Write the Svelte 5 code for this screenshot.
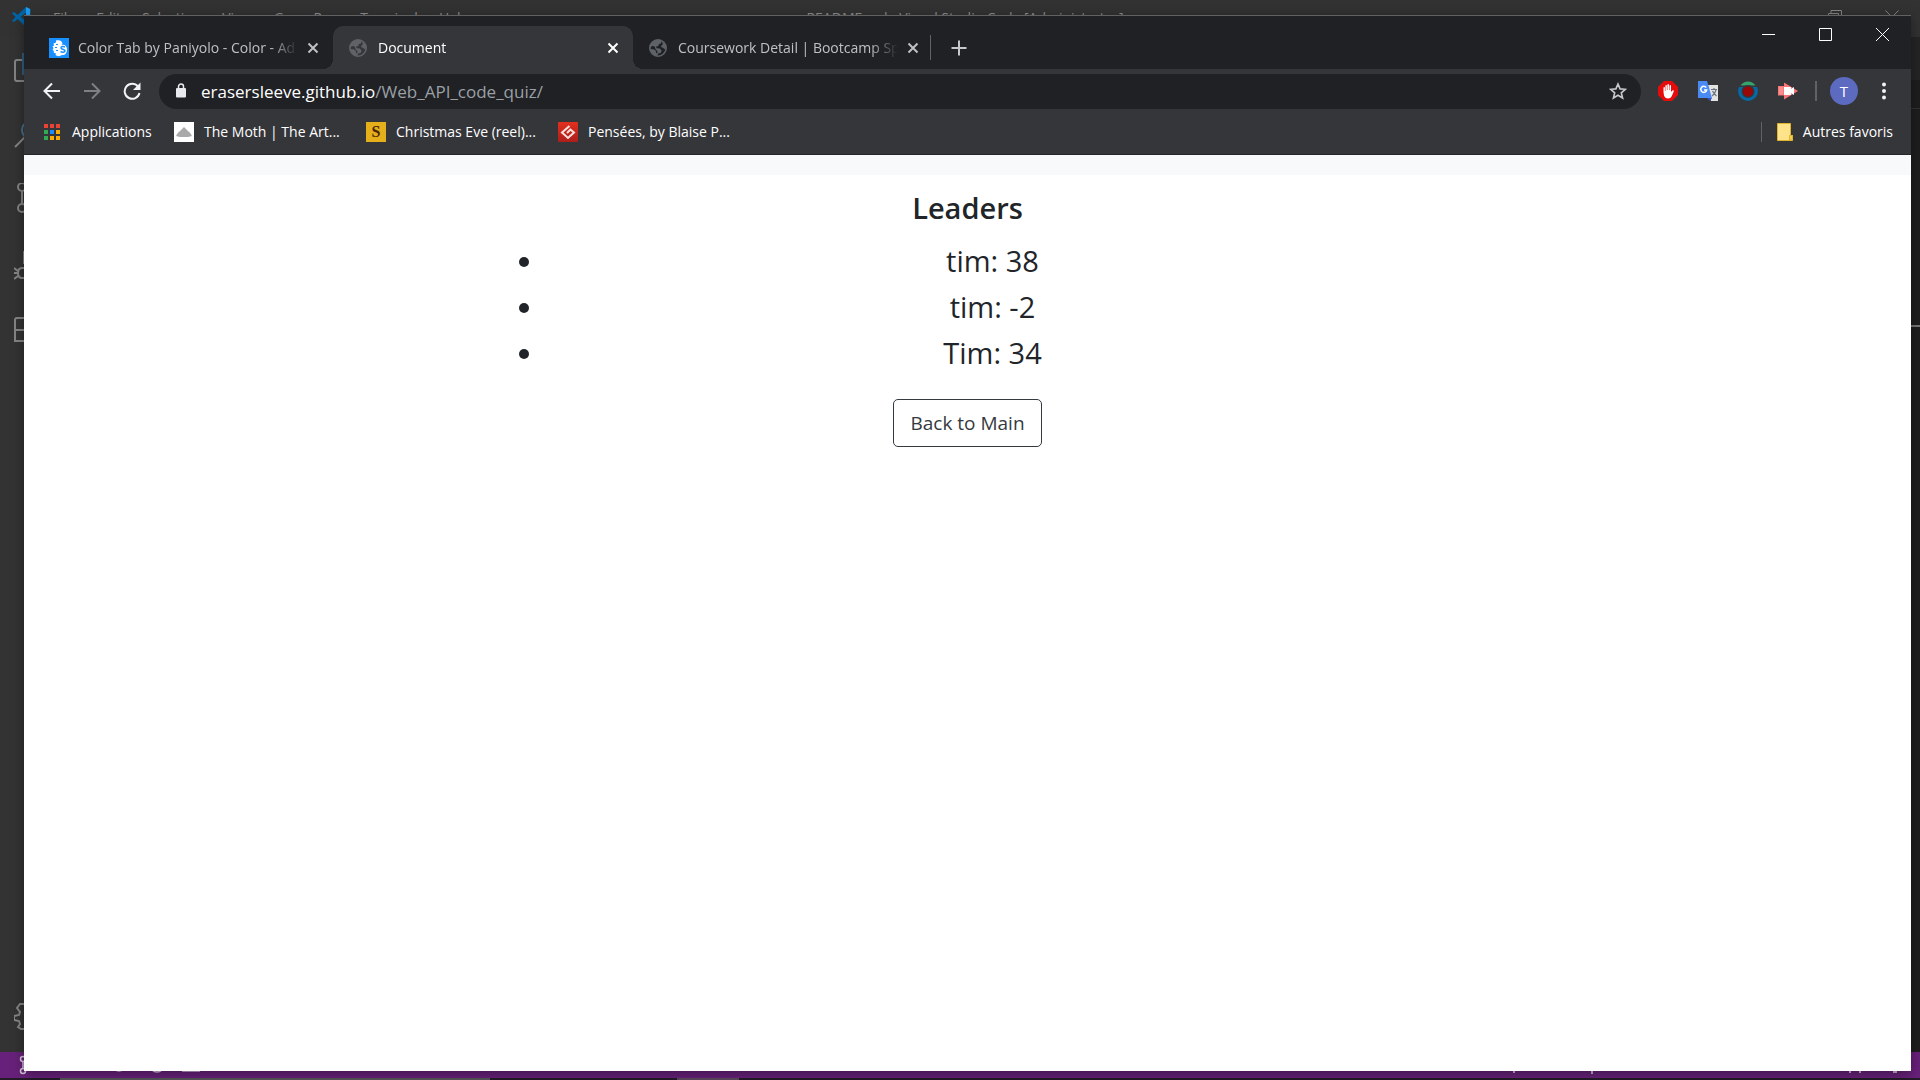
<script>
  const menus = ['File', 'Edit', 'Selection', 'View', 'Go', 'Run', 'Terminal', 'Help'];
  const scores = ['tim: 38', 'tim: -2', 'Tim: 34'];
  const appColors = ['#ea4335', '#ea4335', '#ea4335', '#34a853', '#1a8cff', '#fbab04', '#34a853', '#fbab04', '#fbab04'];
</script>

{#snippet globe()}
  <svg class="favicon globe" viewBox="0 0 20 20" aria-hidden="true">
    <circle cx="9" cy="10" r="8.2" fill="none" stroke="#5f6368" stroke-width="1.6" />
    <path fill="#5f6368" d="M1 10C1 5 4.500 1.800 9 1.800c1.500 0 2.600.400 3.500.900L12 5.500 9.800 6l-.300 2-2.300.500.300 1.700 3.500.200 1.600 2.300-1 2.200-2.600.600-.500 2.300C4 18 1.600 14.500 1.200 11l3.300.200 2.300 1.600.200 2 1.300.800.200-2.300-2-2-.800-2.800L3 8z" />
    <path fill="#5f6368" d="M13 3.500c2.500 1.500 4 3.500 4.100 6.200l-1.700 1.500-1.400-1.500-1.800-.500.200-1.700 1.500-1.300z" />
  </svg>
{/snippet}

{#snippet cross()}
  <svg width="12" height="12" viewBox="0 0 12 12" aria-hidden="true">
    <path d="M1.500 1.500l9 9M10.500 1.500l-9 9" stroke="currentColor" stroke-width="2" />
  </svg>
{/snippet}

<div class="desktop">
  <section class="editor">
    <header class="titlebar">
      <svg class="logo" viewBox="0 0 24 24" aria-hidden="true">
        <path fill="#0065a9" d="M18 0l5 2.500v19L18 24 8 14.500 3.500 18 1 16.700 5.500 12 1 7.300 3.500 6 8 9.500z" />
        <path fill="#1f9cf0" d="M18 0l5 2.500v19L18 24z" />
        <path fill="#323233" d="M18 7v10l-6.500-5z" />
      </svg>
      <nav class="menus">
        {#each menus as menu}<span>{menu}</span>{/each}
      </nav>
      <span class="doc-title">README.md - Visual Studio Code [Administrator]</span>
      <div class="editor-controls">
        <svg width="14" height="14" viewBox="0 0 14 14" fill="none" stroke="#858585"><path d="M.500 3.500h10v10h-10zM3 3V.500h10.500V11H11" /></svg>
        <svg width="14" height="14" viewBox="0 0 14 14" fill="none" stroke="#858585"><path d="M.500.500l13 13M13.500.500l-13 13" /></svg>
      </div>
    </header>
    <div class="workspace">
      <aside class="activity">
        <svg viewBox="0 0 32 32"><path d="M10 7H3q-2 0-2 2v17q0 2 2 2h15v-5" /><path stroke="#2f5f80" d="M9 1h12v20H9z" /></svg>
        <svg viewBox="0 0 32 32"><path d="M1 29l11-11" /><circle cx="17" cy="12" r="9" stroke="#46708c" /></svg>
        <svg viewBox="0 0 32 32"><circle cx="8" cy="4" r="4" /><circle cx="8" cy="25" r="4" /><path d="M8 8v13" /></svg>
        <svg viewBox="0 0 32 32"><path d="M10 3v13M12 20H8q-4 0-4 5t4 5h4M0 20l4 3M0 25h4M0 31l4-3" /></svg>
        <svg viewBox="0 0 32 32"><path d="M14 5H3q-2 0-2 2v21h24V17H1M13 5v23" /></svg>
        <svg class="gear" viewBox="0 0 32 32"><path d="M10 4H6L3 8l3 4-1 3-5 1v4l5 1 1 3-2 3 3 2h5l4-4" /></svg>
      </aside>
      <div class="panes">
        <div class="pane-tabs"></div>
        <div class="pane-crumbs"></div>
        <div class="pane-top"></div>
        <div class="pane-bottom"></div>
      </div>
    </div>
    <footer class="statusbar">
      <svg width="220" height="26" viewBox="0 0 220 26" fill="none" stroke="#d8c8de" stroke-width="1.500">
        <circle cx="23" cy="7" r="2.500" /><circle cx="23" cy="19" r="2.500" /><path d="M23 10v7" />
        <circle cx="119" cy="13" r="6" /><circle cx="157" cy="13" r="7" /><path d="M183 19l8-14 8 14z" />
      </svg>
      <svg width="420" height="26" viewBox="0 0 420 26" fill="#c9b5d0">
        <path d="M13 18h2v3h-2zM91 18h2v4h-2zM349 18h2v3h-2zM359 18h2v3h-2zM393 18h4v3h-4z" />
      </svg>
    </footer>
    <div class="taskbar"><i class="start"></i><i class="search"></i><i class="rest"></i><i class="app"></i></div>
  </section>

  <section class="browser">
    <header class="tabstrip">
      <div class="tab">
        <svg class="favicon" viewBox="0 0 20 20" aria-hidden="true">
          <rect width="20" height="20" fill="#1890ff" />
          <path fill="#fff" d="M7 2.500c3-1 6 0 6.500 3l-1 1.500c3-1 5.500 1 5.500 4.500s-2 6-5 5.500c-2 1.500-5 1.500-6.500 0l.500-1.500-2.500-1 .500-1.500-1.500-1 1-2-1-1.500 1.500-1-.500-2L7 4.500z" />
          <path stroke="#1890ff" fill="none" stroke-width="1.500" d="M16 9c-2-1-4-.500-4 1s4 1 4 2.800-3 1.700-4.500.900" />
          <path stroke="#1890ff" fill="none" d="M7 6.500h2M6 9.500h2M7 12.500h2" />
        </svg>
        <span class="tab-title">Color Tab by Paniyolo - Color - Ad</span>
        <button class="close" aria-label="Close tab">{@render cross()}</button>
      </div>
      <div class="tab active">
        {@render globe()}
        <span class="tab-title">Document</span>
        <button class="close" aria-label="Close tab">{@render cross()}</button>
      </div>
      <div class="tab last">
        {@render globe()}
        <span class="tab-title">Coursework Detail | Bootcamp Sp</span>
        <button class="close" aria-label="Close tab">{@render cross()}</button>
      </div>
      <button class="new-tab" aria-label="New tab">
        <svg width="16" height="16" viewBox="0 0 16 16"><path d="M8 .500v15M.500 8h15" stroke="#c6c8cb" stroke-width="2" /></svg>
      </button>
      <div class="window-controls">
        <button aria-label="Minimize"><svg width="13" height="13" viewBox="0 0 13 13"><path d="M0 6.500h13" /></svg></button>
        <button aria-label="Maximize"><svg width="13" height="13" viewBox="0 0 13 13"><path d="M.500.500h12v12H.500z" /></svg></button>
        <button aria-label="Close"><svg width="13" height="13" viewBox="0 0 13 13"><path d="M0 0l13 13M13 0L0 13" /></svg></button>
      </div>
    </header>

    <div class="toolbar">
      <button class="tool" aria-label="Back"><svg width="18" height="18" viewBox="0 0 18 18" fill="none" stroke="#f1f3f4" stroke-width="2"><path d="M17 9H2M9 1.500L1.500 9 9 16.500" /></svg></button>
      <button class="tool" aria-label="Forward"><svg width="18" height="18" viewBox="0 0 18 18" fill="none" stroke="#7d8084" stroke-width="2"><path d="M1 9h15M9 1.500L16.500 9 9 16.500" /></svg></button>
      <button class="tool" aria-label="Reload"><svg width="18" height="18" viewBox="0 0 18 18" fill="none" stroke="#f1f3f4" stroke-width="2"><path d="M15 4.500A7.500 7.500 0 1 0 16.500 11" /><path fill="#f1f3f4" stroke="none" d="M17.500.500V8H10z" /></svg></button>
      <div class="omnibox">
        <svg width="12" height="16" viewBox="0 0 12 16" aria-hidden="true"><rect x="1" y="5" width="10" height="9.500" rx="1" fill="#e8eaed" /><path d="M3.500 6V3.500a2.500 2.500 0 0 1 5 0V6" fill="none" stroke="#e8eaed" stroke-width="1.500" /></svg>
        <span class="url">erasersleeve.github.io<span>/Web_API_code_quiz/</span></span>
        <button class="star" aria-label="Bookmark this page"><svg width="18" height="18" viewBox="0 0 18 18" fill="none" stroke="#c6c8cb" stroke-width="1.600"><path d="M9 2l2.100 4.900 5.200.400-4 3.500 1.300 5.200L9 13.200 4.400 16l1.300-5.200-4-3.500 5.200-.400z" /></svg></button>
      </div>
      <button class="tool" aria-label="Ad blocker">
        <svg width="20" height="20" viewBox="0 0 20 20"><path fill="#e60c0c" d="M6 0h8l6 6v8l-6 6H6l-6-6V6z" /><path fill="#fff" d="M5.500 11V6.500q1-.800 1.400 0V10h.500V4.500q.900-.900 1.500 0V9h.500V3.500q.900-.900 1.600 0V9h.500V4.500q.900-.900 1.500 0V11l1.300-1.500q1.300-.500 1.600.500L14 14.500q-1 3-4 3t-4-3z" /></svg>
      </button>
      <button class="tool" aria-label="Translate">
        <svg width="22" height="22" viewBox="0 0 22 22"><path fill="#e3e3e3" d="M11 5h10v16h-7z" /><path fill="none" stroke="#68757c" stroke-width="1.200" d="M14 9.500h6M17 8v1.500M19 10q-1 4-4 6M15.500 11q1.500 3 4 5" /><path fill="#3353c5" d="M10 18h5l-2 3z" /><path fill="#4a8af4" d="M1 1h9l5 17H1z" /><path fill="none" stroke="#fff" stroke-width="1.500" d="M9.200 7.600A3 3 0 1 0 9.700 10H7" /></svg>
      </button>
      <button class="tool" aria-label="Color extension">
        <svg width="20" height="20" viewBox="0 0 20 20"><path fill="#34a56b" d="M2.500 4.500Q5.500.500 10 .500t7.500 4z" /><path fill="#0668a4" d="M1 6h18q1 2 1 4a10 10 0 0 1-20 0q0-2 1-4z" /><circle cx="10" cy="10.500" r="6.500" fill="#35363a" /><circle cx="10" cy="10.500" r="5" fill="#980808" /></svg>
      </button>
      <button class="tool" aria-label="Screen recorder">
        <svg width="20" height="20" viewBox="0 0 20 20"><path fill="#fb7476" d="M0 5h6V1.500L20 10 6 18.500V14.500H0z" /><path fill="#fff" d="M6 6h7v2l3-2v8l-3-2v2H6z" /><path fill="#ffb3b4" d="M1 6h4v7.500H1z" opacity=".4" /></svg>
      </button>
      <span class="divider"></span>
      <button class="tool" aria-label="Profile T"><span class="avatar">T</span></button>
      <button class="tool" aria-label="Menu"><svg width="4" height="18" viewBox="0 0 4 18" fill="#f1f3f4"><circle cx="2" cy="2.500" r="2" /><circle cx="2" cy="9" r="2" /><circle cx="2" cy="15.500" r="2" /></svg></button>
    </div>

    <nav class="bookmarks">
      <a class="apps" href="#apps">
        <span class="app-grid">{#each appColors as color}<i style:background={color}></i>{/each}</span>
        Applications
      </a>
      <a class="mark" href="#moth">
        <svg width="20" height="20" viewBox="0 0 20 20"><path fill="#fff" d="M0 0h20v20H0z" /><path fill="#a9a9a9" d="M2 14q1-3 4-5l4-4 4 4q3 2 4 5l-4 1H6z" /></svg>
        The Moth | The Art...
      </a>
      <a class="mark" href="#reel">
        <span class="letter-icon">S</span>
        Christmas Eve (reel)...
      </a>
      <a class="mark" href="#pensees">
        <svg width="20" height="20" viewBox="0 0 20 20"><defs><linearGradient id="red" x2="0" y2="1"><stop stop-color="#e3301f" /><stop offset="1" stop-color="#ad1e1a" /></linearGradient></defs><rect width="20" height="20" rx="1" fill="url(#red)" /><path d="M11.500 4L4 10.500l6 5.500 6-5.500-3.500-3L9 11" fill="none" stroke="#f4e2df" stroke-width="2" /></svg>
        Pensées, by Blaise P...
      </a>
      <a class="other" href="#other">
        <svg width="16" height="18" viewBox="0 0 16 18"><path fill="#ffe38a" stroke="#dfb52f" d="M.500.500h13v12h2v5H.500z" /><path fill="#f6cf50" stroke="#dfb52f" d="M12.500 12.500h3v3l-3 2z" /></svg>
        Autres favoris
      </a>
    </nav>

    <main class="page">
      <div class="strip"></div>
      <div class="leaders">
        <h1>Leaders</h1>
        <ul>
          {#each scores as score}<li>{score}</li>{/each}
        </ul>
        <button class="back">Back to Main</button>
      </div>
    </main>
  </section>
</div>

<style>
  :global(body) { margin: 0; background: #1e1e1e; }
  button { padding: 0; border: 0; background: none; color: inherit; font: inherit; }
  svg { display: block; flex: none; }
  .desktop { position: relative; height: 100vh; overflow: hidden; font-family: "Open Sans", "Noto Sans", sans-serif; }

  .editor { display: flex; flex-direction: column; height: 100%; font-size: 14px; color: #8f8f8f; }
  .titlebar { display: grid; grid-template-columns: auto 1fr auto 1fr; align-items: center; box-sizing: border-box; height: 37px; padding: 0 21px 3px 11px; background: #323233; white-space: nowrap; }
  .logo { width: 20px; height: 20px; }
  .menus { display: flex; gap: 21px; padding-left: 22px; }
  .editor-controls { display: flex; justify-content: flex-end; gap: 43px; }
  .workspace { display: flex; flex: 1; }
  .activity { display: flex; flex-direction: column; width: 60px; background: #333; }
  .activity svg { width: 32px; height: 32px; margin: 16px 14px 17px; fill: none; stroke: #858585; stroke-width: 2; }
  .activity .gear { margin-top: auto; margin-bottom: 20px; }
  .panes { display: flex; flex: 1; flex-direction: column; }
  .pane-tabs { height: 43px; background: #252526; }
  .pane-crumbs { height: 28px; border-bottom: 1px solid #333; }
  .pane-top { height: 216px; border-bottom: 2px solid #777; }
  .pane-bottom { flex: 1; }
  .statusbar { display: flex; justify-content: space-between; height: 26px; background: #68217a; }
  .taskbar { display: flex; height: 2px; background: #241a28; }
  .taskbar i { width: 60px; }
  .taskbar .search { width: 430px; background: #55555a; }
  .taskbar .rest { width: 187px; }
  .taskbar .app { width: 62px; background: #5c4a5e; }

  .browser { position: absolute; inset: 15px 9px 9px 24px; display: flex; flex-direction: column; background: #fff; color: #fff; font-size: 14px; box-shadow: 0 3px 12px rgba(0, 0, 0, 0.4); }
  .tabstrip { display: flex; align-items: flex-end; height: 53px; padding-left: 9px; border-top: 1px solid #616161; background: #202124; }
  .tab { position: relative; display: flex; align-items: center; gap: 9px; box-sizing: border-box; width: 300px; height: 43px; padding: 0 14px 0 16px; color: #bdc1c6; }
  .tab.active { border-radius: 10px 10px 0 0; background: #35363a; color: #fff; }
  .tab.active::before, .tab.active::after { content: ""; position: absolute; bottom: 0; width: 10px; height: 10px; }
  .tab.active::before { right: 100%; background: radial-gradient(circle at 0 0, transparent 10px, #35363a 10px); }
  .tab.active::after { left: 100%; background: radial-gradient(circle at 100% 0, transparent 10px, #35363a 10px); }
  .tab.last::after { content: ""; position: absolute; right: 2px; top: 9px; width: 1px; height: 25px; background: #5f6368; }
  .favicon { width: 20px; height: 20px; }
  .tab-title { flex: 1; overflow: hidden; white-space: nowrap; mask-image: linear-gradient(90deg, #000 calc(100% - 28px), transparent); }
  .new-tab { display: grid; place-items: center; width: 35px; height: 43px; margin-left: 8px; }
  .window-controls { display: flex; align-self: flex-start; margin-left: auto; }
  .window-controls button { display: grid; place-items: center; width: 57px; height: 37px; }
  .window-controls path { fill: none; stroke: #fff; stroke-width: 1; }

  .toolbar { display: flex; align-items: center; height: 44px; padding: 0 7px 0 8px; background: #35363a; }
  .tool { display: grid; place-items: center; width: 40px; height: 40px; }
  .omnibox { display: flex; flex: 1; align-items: center; height: 35px; margin: 0 7px; padding: 0 14px 0 16px; border-radius: 18px; background: #202124; }
  .url { flex: 1; padding-left: 14px; font-size: 17px; }
  .url span { color: #9aa0a6; }
  .divider { width: 2px; height: 20px; margin: 0 7px; background: #5f6368; }
  .avatar { width: 28px; height: 28px; border-radius: 50%; background: #5c6bc0; line-height: 28px; font-size: 15px; text-align: center; }

  .bookmarks { display: flex; align-items: center; height: 37px; padding: 0 18px 4px 20px; border-bottom: 1px solid #26272a; background: #35363a; }
  .bookmarks a { display: flex; align-items: center; gap: 10px; color: #fff; text-decoration: none; white-space: nowrap; }
  .bookmarks .apps { gap: 12px; width: 130px; }
  .app-grid { display: grid; grid-template-columns: repeat(3, 4px); gap: 2px; }
  .app-grid i { height: 4px; }
  .mark { width: 192px; }
  .letter-icon { width: 20px; height: 20px; background: #e5ae1b; color: #4a2508; font: 700 16px/20px "Liberation Serif", serif; text-align: center; }
  .bookmarks .other { height: 20px; margin-left: auto; padding-left: 15px; border-left: 1px solid #5f6368; }

  .page { flex: 1; color: #212529; }
  .strip { height: 20px; background: #f8f9fa; }
  .leaders { width: 50%; margin: 0 auto; padding-top: 15px; text-align: center; }
  h1 { margin: 0 0 12px; font-size: 29px; font-weight: 600; line-height: 36px; }
  ul { margin: 0 0 23px; padding-left: 50px; font-size: 29px; line-height: 46px; }
  .back { height: 48px; padding: 0 16px; border: 1px solid #343a40; border-radius: 5px; color: #343a40; font-size: 19px; }
</style>
